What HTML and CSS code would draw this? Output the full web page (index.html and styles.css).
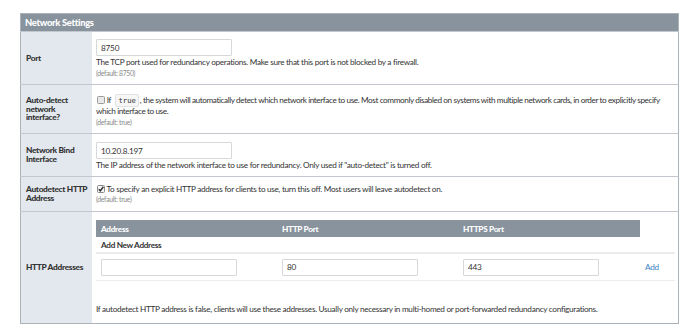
FILE: index.html
```html
<!DOCTYPE html>
<html>
<head>
    <meta charset="UTF-8">
    <title>Network Settings</title>
    <link rel="stylesheet" href="styles.css">
</head>
<body>
    <table class="settings">
        <tr class="settings-head">
            <th colspan="2">Network Settings</th>
        </tr>

        <tr class="row-port">
            <td class="label">Port</td>
            <td class="field">
                <input class="text-input" type="text" value="8750">
                <div class="desc">The TCP port used for redundancy operations. Make sure that this port is not blocked by a firewall.</div>
                <div class="default">(default: 8750)</div>
            </td>
        </tr>

        <tr class="row-detect">
            <td class="label">Auto-detect network interface?</td>
            <td class="field">
                <div class="desc">
                    <svg class="check" width="8" height="8" viewBox="0 0 8 8"><rect x="0.5" y="0.5" width="7" height="7" rx="1" fill="#e9e9e9" stroke="#9a9a9a"/></svg>
                    If <code>true</code>, the system will automatically detect which network interface to use. Most commonly disabled on systems with multiple network cards, in order to explicitly specify which interface to use.
                </div>
                <div class="default">(default: true)</div>
            </td>
        </tr>

        <tr class="row-bind">
            <td class="label">Network Bind Interface</td>
            <td class="field">
                <input class="text-input" type="text" value="10.20.8.197">
                <div class="desc">The IP address of the network interface to use for redundancy. Only used if "auto-detect" is turned off.</div>
            </td>
        </tr>

        <tr class="row-http">
            <td class="label">Autodetect HTTP Address</td>
            <td class="field">
                <div class="desc">
                    <svg class="check" width="8" height="8" viewBox="0 0 8 8"><rect x="0.5" y="0.5" width="7" height="7" rx="1" fill="#f4f4f4" stroke="#8a8a8a"/><path d="M1.8 4.2 L3.3 5.8 L6.4 1.8" fill="none" stroke="#333" stroke-width="1.4"/></svg>
                    To specify an explicit HTTP address for clients to use, turn this off. Most users will leave autodetect on.
                </div>
                <div class="default">(default: true)</div>
            </td>
        </tr>

        <tr class="row-addresses">
            <td class="label">HTTP Addresses</td>
            <td class="field">
                <table class="addresses">
                    <tr class="addresses-head">
                        <th>Address</th>
                        <th>HTTP Port</th>
                        <th>HTTPS Port</th>
                        <th class="blank"></th>
                    </tr>
                    <tr class="addresses-new">
                        <td colspan="4">Add New Address</td>
                    </tr>
                    <tr class="addresses-inputs">
                        <td><input class="text-input" type="text" value=""></td>
                        <td><input class="text-input" type="text" value="80"></td>
                        <td><input class="text-input" type="text" value="443"></td>
                        <td class="add"><a href="#">Add</a></td>
                    </tr>
                </table>
                <div class="desc note">If autodetect HTTP address is false, clients will use these addresses. Usually only necessary in multi-homed or port-forwarded redundancy configurations.</div>
            </td>
        </tr>
    </table>
</body>
</html>
```

FILE: styles.css
```css
:root {
    --head-color: #88939e;
    --label-bg: #e3e8ee;
    --border-color: #aab2ba;
    --text-color: #333333;
    --muted-color: #8a8a8a;
    --link-color: #3b7fc4;
}

body {
    margin: 0;
    padding: 13px 11px 0 20px;
    background: #ffffff;
    font-family: 'Source Sans Pro', 'Lato', sans-serif;
    font-size: 8.2px;
    letter-spacing: -0.3px;
    color: var(--text-color);
}

.settings {
    width: 659px;
    border-collapse: collapse;
    border: 1px solid var(--border-color);
}

.settings-head th {
    background: var(--head-color);
    color: #ffffff;
    font-size: 9.4px;
    font-weight: 900;
    letter-spacing: -0.3px;
    text-align: left;
    height: 17px;
    padding: 0 4px;
    line-height: 17px;
}

.settings td {
    border-top: 1px solid #c2c8ce;
}

.settings td.label {
    width: 64px;
    padding: 0 3px 0 5px;
    background: var(--label-bg);
    font-size: 8.3px;
    font-weight: 900;
    line-height: 8.8px;
    vertical-align: middle;
}

.settings td.field {
    padding: 0 3px 0 4px;
    vertical-align: top;
}

.row-port { height: 53px; }
.row-detect { height: 49px; }
.row-bind { height: 43px; }
.row-http { height: 35px; }
.row-addresses { height: 112px; }

.row-port td.field { padding-top: 7px; }
.row-detect td.field { padding-top: 10px; }
.row-bind td.field { padding-top: 8px; }
.row-http td.field { padding-top: 7px; }
.row-addresses td.field { padding-top: 8px; }

.text-input {
    display: block;
    box-sizing: border-box;
    width: 136px;
    height: 17px;
    margin: 0;
    padding: 0 4px;
    border: 1px solid #d6d9dc;
    border-radius: 1px;
    font-family: inherit;
    font-size: 8.2px;
    letter-spacing: -0.2px;
    color: var(--text-color);
}

.desc {
    line-height: 11px;
}

.row-detect .desc {
    letter-spacing: -0.4px;
}

.row-port .desc,
.row-bind .desc {
    margin-top: 1px;
}

.default {
    font-size: 6.8px;
    color: var(--muted-color);
    line-height: 10px;
}

.row-http .default {
    line-height: 8px;
}

.check {
    margin-left: 1px;
    vertical-align: -1px;
}

code {
    font-family: 'DejaVu Sans Mono', monospace;
    font-size: 7.2px;
    letter-spacing: 0;
    margin: 0 1px 0 3px;
    padding: 1px 2px;
    background: #f6f6f6;
    border: 1px solid #e2e2e2;
    border-radius: 2px;
}

.addresses {
    width: 579px;
    border-collapse: collapse;
}

.addresses-head th {
    background: var(--head-color);
    color: #ffffff;
    font-weight: 900;
    text-align: left;
    height: 17px;
    padding: 0 5px;
}

.addresses-head th:nth-child(1),
.addresses-head th:nth-child(2) {
    width: 171px;
}

.addresses-head th.blank {
    background: #ffffff;
    width: 25px;
}

.addresses td {
    border-top: none;
}

.addresses-new td {
    font-weight: 700;
    height: 14px;
    padding: 1px 5px 0;
    border-bottom: 2px solid #ececec;
}

.addresses-inputs td {
    height: 26px;
    padding: 0 5px;
    border-bottom: 1px solid #ececec;
}

.add a {
    color: var(--link-color);
    text-decoration: none;
}

.note {
    margin-top: 23px;
}
```
